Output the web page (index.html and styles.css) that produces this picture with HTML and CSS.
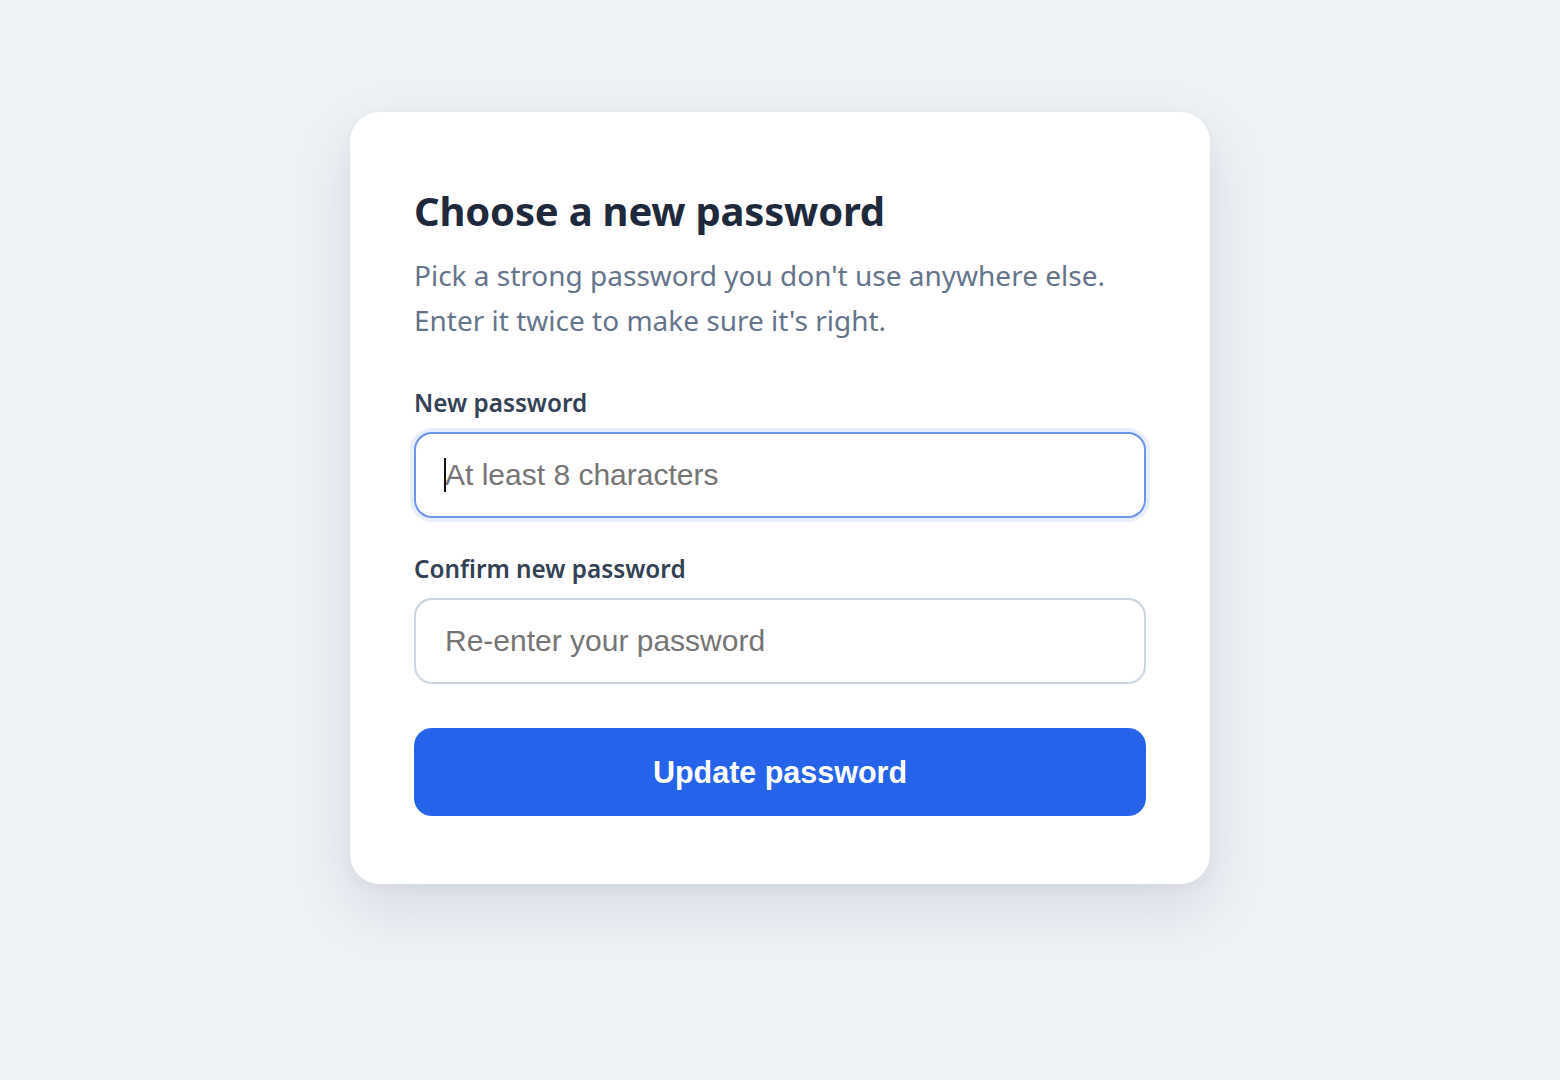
FILE: index.html
```html
<!DOCTYPE html>
<html lang="en">
<head>
<meta charset="utf-8">
<title>Choose a new password</title>
<link rel="stylesheet" href="styles.css">
</head>
<body>
<main class="page">
  <form class="card" onsubmit="return false">
    <h1 class="title">Choose a new password</h1>
    <p class="subtitle">Pick a strong password you don't use anywhere else. Enter it twice to make sure it's right.</p>
    <div class="field">
      <label class="label" for="pw1">New password</label>
      <div class="input-wrap">
        <input class="input input-focused" id="pw1" type="password" placeholder="At least 8 characters" autofocus>
        <span class="caret" aria-hidden="true"></span>
      </div>
    </div>
    <div class="field field-second">
      <label class="label" for="pw2">Confirm new password</label>
      <input class="input" id="pw2" type="password" placeholder="Re-enter your password">
    </div>
    <button class="button" type="submit">Update password</button>
  </form>
</main>
</body>
</html>
```
FILE: styles.css
```css
* { box-sizing: border-box; }
html, body { margin: 0; padding: 0; }
body {
  background: #eef2f7;
  font-family: "Noto Sans", "Open Sans", sans-serif;
  min-height: 100vh;
}
.page {
  display: flex;
  justify-content: center;
  padding-top: 112px;
}
.card {
  width: 860px;
  background: #ffffff;
  border-radius: 30px;
  padding: 75px 64px 68px;
  box-shadow: 0 24px 60px rgba(15, 23, 42, 0.10), 0 4px 14px rgba(15, 23, 42, 0.04);
  display: flex;
  flex-direction: column;
}
.title {
  margin: 0;
  font-size: 40px;
  line-height: 48px;
  font-weight: 700;
  color: #1e293b;
  letter-spacing: -0.2px;
}
.subtitle {
  margin: 18px 0 0;
  font-size: 28px;
  line-height: 45px;
  color: #64748b;
  font-weight: 400;
}
.field {
  display: flex;
  flex-direction: column;
  gap: 13px;
  margin-top: 44px;
}
.field-second { margin-top: 35px; }
.label {
  font-size: 24.3px;
  line-height: 32px;
  font-weight: 600;
  color: #334155;
}
.input-wrap {
  position: relative;
}
.input {
  display: block;
  width: 100%;
  height: 86px;
  border: 2px solid #cbd5e1;
  border-radius: 18px;
  padding: 0 29px;
  font-family: "Liberation Sans", Arial, sans-serif;
  font-size: 30px;
  color: #1e293b;
  background: #fff;
  outline: none;
  caret-color: transparent;
}
.input::placeholder { color: #757575; opacity: 1; }
.input-focused {
  border-color: #6b93e9;
  box-shadow: 0 0 0 4px #e8eefc;
}
.caret {
  position: absolute;
  left: 30px;
  top: 26px;
  width: 2px;
  height: 34px;
  background: #111111;
}
.button {
  margin-top: 44px;
  height: 88px;
  border: none;
  border-radius: 18px;
  background: #2563eb;
  color: #ffffff;
  font-family: "Liberation Sans", Arial, sans-serif;
  font-size: 30.5px;
  font-weight: 700;
  cursor: pointer;
}
```
